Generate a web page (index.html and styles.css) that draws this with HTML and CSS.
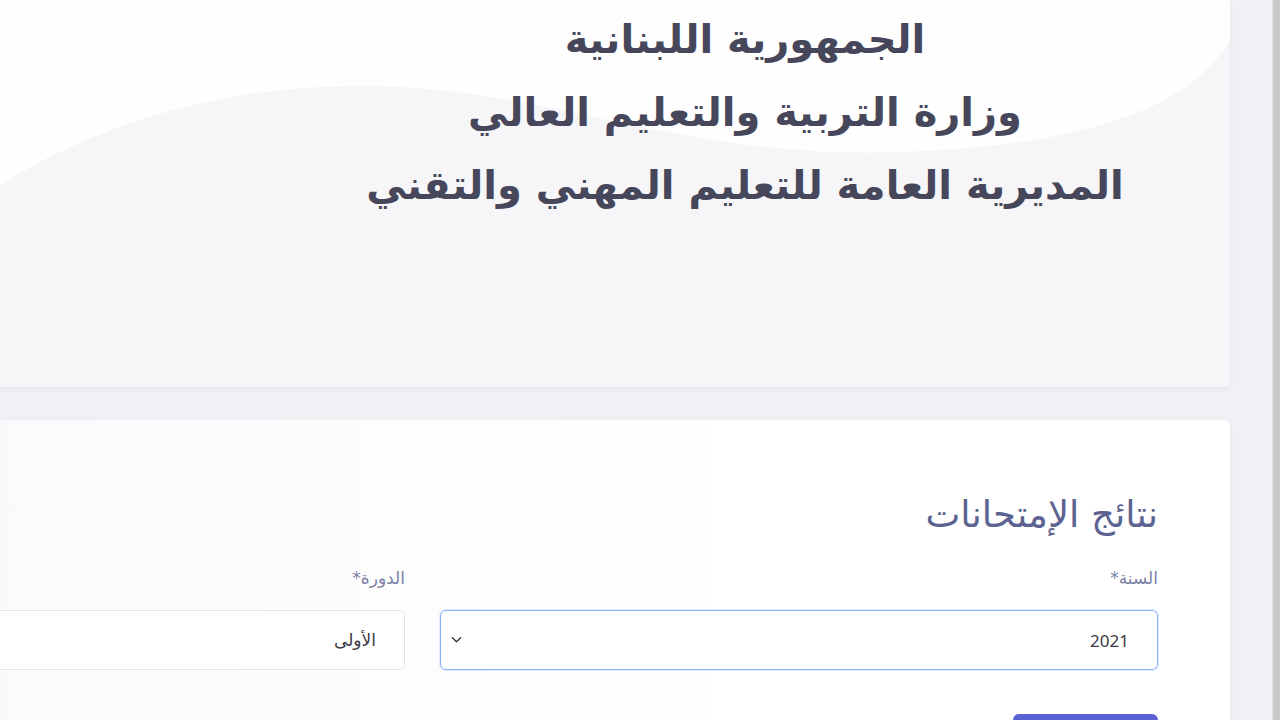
FILE: index.html
```html
<!DOCTYPE html>
<html lang="ar" dir="rtl">
<head>
<meta charset="utf-8">
<title>نتائج الإمتحانات</title>
<link rel="stylesheet" href="styles.css">
</head>
<body>
<div class="viewport">
  <main class="page">
    <section class="card hero">
      <svg class="wave" viewBox="0 0 1230 387" preserveAspectRatio="none" aria-hidden="true">
        <path d="M0 185 C 120 110, 260 80, 400 87 C 560 95, 700 160, 900 152 C 1080 146, 1190 110, 1230 40 L 1230 387 L 0 387 Z" fill="#f6f6f9"/>
      </svg>
      <div class="hero-text">
        <h1 class="hero-line">الجمهورية اللبنانية</h1>
        <h1 class="hero-line">وزارة التربية والتعليم العالي</h1>
        <h1 class="hero-line">المديرية العامة للتعليم المهني والتقني</h1>
      </div>
    </section>

    <section class="card form-card">
      <h2 class="form-title">نتائج الإمتحانات</h2>
      <div class="form-grid">
        <div class="field">
          <label class="field-label">السنة*</label>
          <div class="select focused">
            <span class="select-value num">2021</span>
            <svg class="chev" viewBox="0 0 12 8" aria-hidden="true"><path d="M1.5 1.5 L6 6 L10.5 1.5" fill="none" stroke="#3a3a48" stroke-width="1.6" stroke-linecap="round" stroke-linejoin="round"/></svg>
          </div>
        </div>
        <div class="field">
          <label class="field-label">الدورة*</label>
          <div class="select">
            <span class="select-value">الأولى</span>
          </div>
        </div>
      </div>
      <div class="actions">
        <button class="btn" aria-label="عرض النتيجة"></button>
      </div>
    </section>
  </main>
  <div class="scrollbar"></div>
</div>
</body>
</html>
```
FILE: styles.css
```css
html, body {
  margin: 0;
  padding: 0;
  background: #f0f0f5;
  overflow: hidden;
}
body {
  font-family: "DejaVu Sans", "Noto Sans", sans-serif;
  width: 1280px;
  height: 720px;
}
.viewport {
  direction: ltr;
  display: flex;
  width: 1280px;
  height: 720px;
}
.page {
  direction: rtl;
  flex: 1 1 0;
  min-width: 0;
  padding-left: 0;
  padding-right: 42px;
  display: flex;
  flex-direction: column;
  gap: 33px;
}
.scrollbar {
  flex: none;
  width: 7px;
  background: #cacaca;
  border-left: 1px solid #e2e2e2;
}
.card {
  background: #fdfdfe;
  box-shadow: 0 2px 6px rgba(40, 40, 90, 0.05);
  position: relative;
  overflow: hidden;
  min-width: 0;
}
.hero {
  height: 387px;
  flex: none;
  background: #fefefe;
  border-radius: 0 0 6px 0;
}
.wave {
  position: absolute;
  inset: 0;
  width: 100%;
  height: 100%;
}
.hero-text {
  position: relative;
  padding: 3px 0 0 0;
  margin-left: 260px;
  margin-right: 0;
  display: flex;
  flex-direction: column;
  align-items: center;
}
.hero-line {
  margin: 0;
  font-size: 40px;
  font-weight: bold;
  line-height: 73px;
  color: #47475b;
}
.form-card {
  flex: 1;
  border-radius: 0 6px 0 0;
  background: linear-gradient(90deg, #fafafc 0%, #ffffff 60%);
  padding: 70px 72px 0 0;
}
.form-title {
  margin: 0;
  font-size: 37px;
  font-weight: normal;
  color: #5c6390;
  line-height: 50px;
}
.form-grid {
  margin-top: 28px;
  display: grid;
  grid-template-columns: 718px 718px;
  gap: 35px;
}
.field {
  display: flex;
  flex-direction: column;
  gap: 22px;
}
.field-label {
  font-size: 17px;
  color: #7b7fa6;
  line-height: 20px;
}
.select {
  height: 60px;
  box-sizing: border-box;
  border: 1.5px solid #e3e5ee;
  border-radius: 6px;
  background: #fff;
  display: flex;
  align-items: center;
  justify-content: space-between;
  padding: 0 28px 0 10px;
}
.select.focused {
  border-color: #8cb3f5;
  box-shadow: 0 0 0 1px rgba(140, 179, 245, 0.25);
}
.select-value {
  font-family: "DejaVu Sans", sans-serif;
  font-size: 17px;
  color: #3a3a44;
}
.select-value.num {
  font-family: "Noto Sans", sans-serif;
  font-size: 17px;
}
.chev {
  width: 11px;
  height: 8px;
}
.actions {
  margin-top: 44px;
  display: flex;
}
.btn {
  width: 145px;
  height: 48px;
  border: 0;
  border-radius: 6px;
  background: #5a62d6;
  padding: 0;
}
```
